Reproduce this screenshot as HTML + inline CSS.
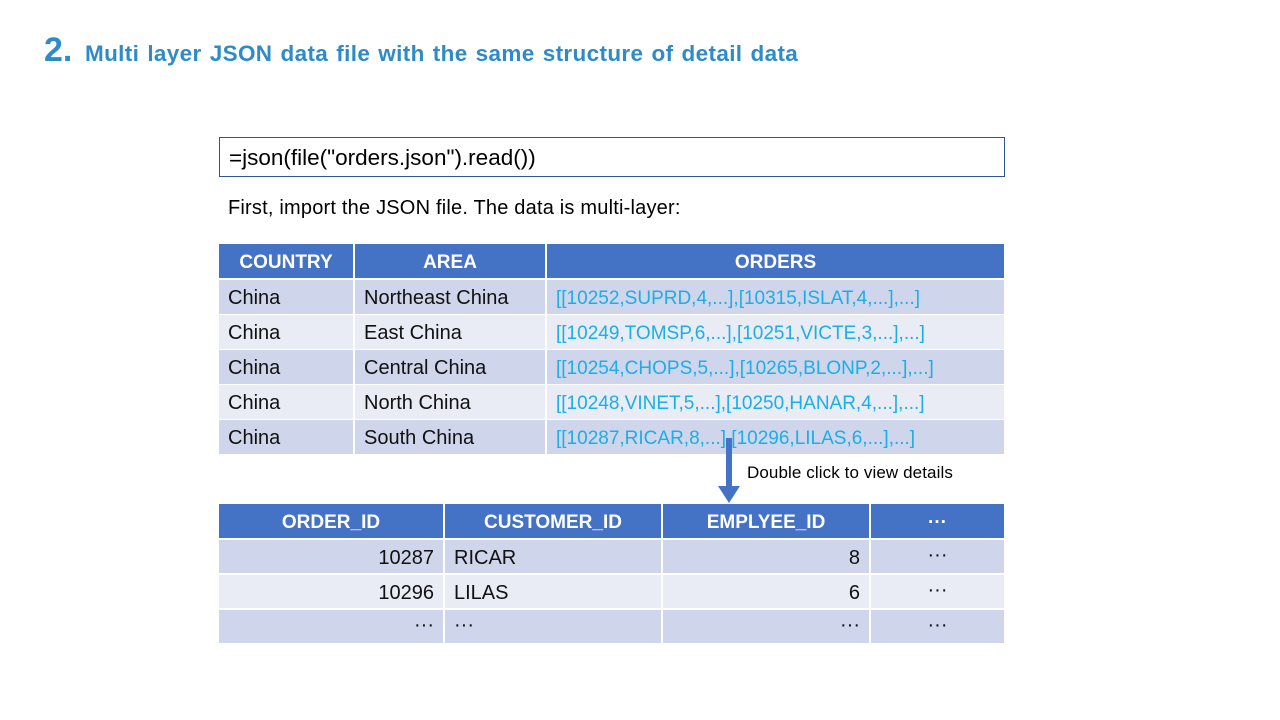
<!DOCTYPE html>
<html><head><meta charset="utf-8"><style>
body{margin:0;width:1280px;height:720px;background:#fff;position:relative;overflow:hidden;font-family:"Liberation Sans","Noto Sans CJK SC",sans-serif}
.a{position:absolute;white-space:nowrap}
.c{position:absolute;box-sizing:border-box;font-size:20px;line-height:37px;padding:0 9px;white-space:nowrap;overflow:hidden;color:#111}
.h{background:#4472c4;color:#fff;font-weight:bold;text-align:center;font-size:19px}
.o{background:#cfd5ea}.e{background:#e9ebf5}
.b{color:#1aaeea;font-size:19px}.r{text-align:right}.m{text-align:center}
.d{line-height:30px}
</style></head><body>
<div class="a" style="left:44px;top:31px;color:#2e8bc9;font-weight:bold;font-size:34px">2.</div>
<div class="a" style="left:85px;top:41px;color:#2e8bc9;font-weight:bold;font-size:22.5px;letter-spacing:0.35px;word-spacing:1.5px">Multi layer JSON data file with the same structure of detail data</div>
<div class="a" style="left:219px;top:137px;width:786px;height:40px;box-sizing:border-box;border:1px solid #2f5597;font-size:22.5px;line-height:40px;padding-left:9px">=json(file("orders.json").read())</div>
<div class="a" style="left:228px;top:197px;font-size:20px;letter-spacing:0.2px">First, import the JSON file. The data is multi-layer:</div>

<div class="c h" style="left:219px;top:244px;width:134px;height:34px">COUNTRY</div>
<div class="c h" style="left:355px;top:244px;width:190px;height:34px">AREA</div>
<div class="c h" style="left:547px;top:244px;width:457px;height:34px">ORDERS</div>

<div class="c o" style="left:219px;top:280px;width:134px;height:34px">China</div>
<div class="c o" style="left:355px;top:280px;width:190px;height:34px">Northeast China</div>
<div class="c o b" style="left:547px;top:280px;width:457px;height:34px">[[10252,SUPRD,4,...],[10315,ISLAT,4,...],...]</div>
<div class="c e" style="left:219px;top:315px;width:134px;height:34px">China</div>
<div class="c e" style="left:355px;top:315px;width:190px;height:34px">East China</div>
<div class="c e b" style="left:547px;top:315px;width:457px;height:34px">[[10249,TOMSP,6,...],[10251,VICTE,3,...],...]</div>
<div class="c o" style="left:219px;top:350px;width:134px;height:34px">China</div>
<div class="c o" style="left:355px;top:350px;width:190px;height:34px">Central China</div>
<div class="c o b" style="left:547px;top:350px;width:457px;height:34px">[[10254,CHOPS,5,...],[10265,BLONP,2,...],...]</div>
<div class="c e" style="left:219px;top:385px;width:134px;height:34px">China</div>
<div class="c e" style="left:355px;top:385px;width:190px;height:34px">North China</div>
<div class="c e b" style="left:547px;top:385px;width:457px;height:34px">[[10248,VINET,5,...],[10250,HANAR,4,...],...]</div>
<div class="c o" style="left:219px;top:420px;width:134px;height:34px">China</div>
<div class="c o" style="left:355px;top:420px;width:190px;height:34px">South China</div>
<div class="c o b" style="left:547px;top:420px;width:457px;height:34px">[[10287,RICAR,8,...],[10296,LILAS,6,...],...]</div>

<div class="a" style="left:726px;top:438px;width:6px;height:50px;background:#4472c4"></div>
<div class="a" style="left:718px;top:486px;width:0;height:0;border-left:11px solid transparent;border-right:11px solid transparent;border-top:17px solid #4472c4"></div>
<div class="a" style="left:747px;top:463px;font-size:17px;letter-spacing:0.1px">Double click to view details</div>

<div class="c h" style="left:219px;top:504px;width:224px;height:34px">ORDER_ID</div>
<div class="c h" style="left:445px;top:504px;width:216px;height:34px">CUSTOMER_ID</div>
<div class="c h" style="left:663px;top:504px;width:206px;height:34px">EMPLYEE_ID</div>
<div class="c h" style="left:871px;top:504px;width:133px;height:34px">···</div>

<div class="c o r" style="left:219px;top:540px;width:224px;height:33px">10287</div>
<div class="c o" style="left:445px;top:540px;width:216px;height:33px">RICAR</div>
<div class="c o r" style="left:663px;top:540px;width:206px;height:33px">8</div>
<div class="c o m d" style="left:871px;top:540px;width:133px;height:33px">···</div>
<div class="c e r" style="left:219px;top:575px;width:224px;height:33px">10296</div>
<div class="c e" style="left:445px;top:575px;width:216px;height:33px">LILAS</div>
<div class="c e r" style="left:663px;top:575px;width:206px;height:33px">6</div>
<div class="c e m d" style="left:871px;top:575px;width:133px;height:33px">···</div>
<div class="c o r d" style="left:219px;top:610px;width:224px;height:33px">···</div>
<div class="c o d" style="left:445px;top:610px;width:216px;height:33px">···</div>
<div class="c o r d" style="left:663px;top:610px;width:206px;height:33px">···</div>
<div class="c o m d" style="left:871px;top:610px;width:133px;height:33px">···</div>
</body></html>
